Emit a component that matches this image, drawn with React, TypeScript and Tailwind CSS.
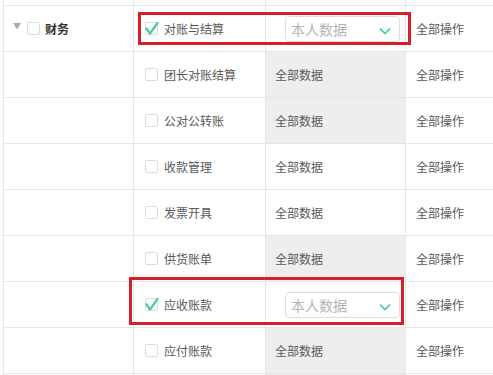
import React from 'react';

type Row = {
  label: string;
  checked?: boolean;
  select?: boolean;
  gray?: boolean;
  group?: string;
};

const rows: Row[] = [
  { label: '对账与结算', checked: true, select: true, group: '财务' },
  { label: '团长对账结算', gray: true },
  { label: '公对公转账', gray: true },
  { label: '收款管理' },
  { label: '发票开具' },
  { label: '供货账单', gray: true },
  { label: '应收账款', checked: true, select: true },
  { label: '应付账款', gray: true },
];

const font = { fontFamily: '"Noto Sans CJK SC", "Noto Sans", sans-serif' };

const Checkbox: React.FC<{ checked?: boolean }> = ({ checked }) => (
  <span className="relative inline-block w-[13px] h-[13px] shrink-0 border border-[#dcdcdc] rounded-[2px] bg-white">
    {checked && (
      <svg
        className="absolute left-[-1px] top-[-1px] overflow-visible"
        width="14"
        height="14"
        viewBox="0 0 14 14"
      >
        <path
          d="M1.5 6.5 L5 11.5 L12.5 1"
          fill="none"
          stroke="#4cc9aa"
          strokeWidth="2.2"
          strokeLinecap="round"
          strokeLinejoin="round"
        />
      </svg>
    )}
  </span>
);

const Select: React.FC = () => (
  <div className="ml-[19px] flex items-center justify-between w-[115px] h-[26px] border border-[#dddddd] rounded-[4px] bg-white pl-[5px] pr-[8px]">
    <span className="text-[14px] text-[#b4b4b4] leading-none">本人数据</span>
    <svg width="12" height="8" viewBox="0 0 12 8" className="mt-[4px]">
      <path d="M1 1.5 L6 6.5 L11 1.5" fill="none" stroke="#3cc9a8" strokeWidth="1.6" />
    </svg>
  </div>
);

export default function App() {
  return (
    <div className="relative w-[493px] h-[375px] overflow-hidden bg-white pl-[3px]" style={font}>
      {/* top partial row */}
      <div className="flex h-[5px]">
        <div className="w-[131px] border-l border-r border-[#e6e6e6]" />
        <div className="w-[132px] border-r border-[#e6e6e6]" />
        <div className="w-[140px] border-r border-[#e6e6e6]" />
        <div className="flex-1" />
      </div>

      {rows.map((r, i) => (
        <div key={i} className="flex h-[46px] border-t border-[#e6e6e6]">
          <div className="w-[131px] border-l border-r border-[#e6e6e6] flex items-center pl-[9px]">
            {r.group && (
              <>
                <span className="text-[#a8a8a8] text-[8px] leading-none mr-[6px] mt-[-6px]">▼</span>
                <Checkbox />
                <span className="ml-[5px] text-[12px] font-bold text-[#333333]">{r.group}</span>
              </>
            )}
          </div>
          <div className="w-[132px] border-r border-[#e6e6e6] flex items-center pl-[11px]">
            <Checkbox checked={r.checked} />
            <span className="ml-[6px] text-[12px] text-[#595959]">{r.label}</span>
          </div>
          <div
            className={`w-[140px] border-r border-[#e6e6e6] flex items-center ${
              r.gray ? 'bg-[#eeeeee]' : 'bg-white'
            }`}
          >
            {r.select ? (
              <Select />
            ) : (
              <span className="pl-[9px] text-[12px] text-[#595959]">全部数据</span>
            )}
          </div>
          <div className="flex-1 flex items-center pl-[10px]">
            <span className="text-[12px] text-[#595959]">全部操作</span>
          </div>
        </div>
      ))}

      <div className="flex h-[10px] border-t border-[#e6e6e6]">
        <div className="w-[131px] border-l border-r border-[#e6e6e6]" />
        <div className="w-[132px] border-r border-[#e6e6e6]" />
        <div className="w-[140px] border-r border-[#e6e6e6] bg-[#eeeeee]" />
        <div className="flex-1" />
      </div>

      {/* annotation boxes */}
      <div className="absolute left-[138px] top-[12px] w-[273px] h-[33px] border-[3px] border-[#d61f28]" />
      <div className="absolute left-[129px] top-[277px] w-[275px] h-[48px] border-[3px] border-[#d61f28]" />
    </div>
  );
}
